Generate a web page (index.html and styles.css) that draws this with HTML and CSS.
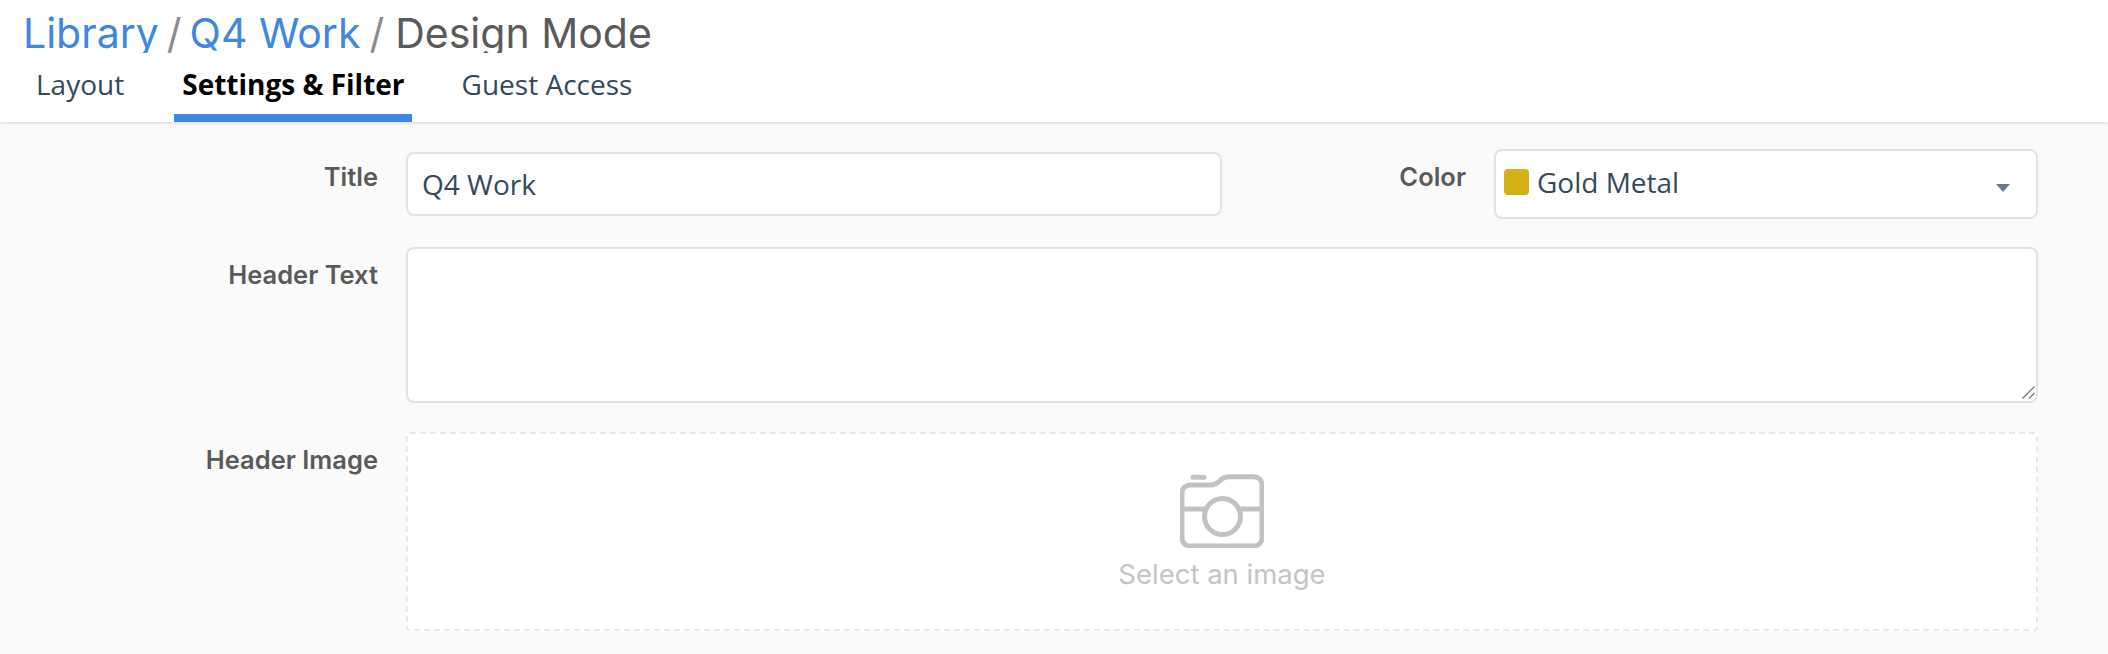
FILE: index.html
```html
<!DOCTYPE html>
<html lang="en">
<head>
    <meta charset="UTF-8">
    <title>Design Mode</title>
    <link rel="stylesheet" href="styles.css">
</head>
<body>
    <div class="header">
        <h1 class="crumbs">
            <a class="crumb-link">Library</a><span class="crumb-sep">/</span><a class="crumb-link">Q4 Work</a><span class="crumb-sep crumb-sep-last">/</span><span class="crumb-current">Design Mode</span>
        </h1>
        <div class="tabs">
            <div class="tab">Layout</div>
            <div class="tab active">Settings &amp; Filter</div>
            <div class="tab">Guest Access</div>
        </div>
    </div>

    <div class="form">
        <div class="row row-title">
            <label class="field-label">Title</label>
            <input class="text-input" type="text" value="Q4 Work">
            <label class="field-label color-label">Color</label>
            <div class="select">
                <span class="swatch"></span>
                <span class="select-text">Gold Metal</span>
                <span class="caret"></span>
            </div>
        </div>
        <div class="row">
            <label class="field-label">Header Text</label>
            <div class="text-wrap">
                <textarea class="text-area"></textarea>
                <svg class="grip" viewBox="0 0 13 13" stroke="#6e6e6e" stroke-width="1.2">
                    <path d="M0.5 12.5 L12.5 0.5 M7 12.5 L12.5 7"/>
                </svg>
            </div>
        </div>
        <div class="row">
            <label class="field-label">Header Image</label>
            <div class="image-drop">
                <svg class="camera" viewBox="0 0 84 74" fill="none" stroke="#c2c2c2" stroke-width="5">
                    <path d="M10 11 H30 C35 11 37 9.5 40 6.5 C43 3.5 45 2.7 49 2.7 H74 a8 8 0 0 1 8 8 V64 a8 8 0 0 1 -8 8 H10 a8 8 0 0 1 -8 -8 V19 a8 8 0 0 1 8 -8 Z"/>
                    <path d="M2 35 H24 M61 35 H82"/>
                    <circle cx="42.5" cy="42.5" r="18"/>
                    <path d="M13 3.2 H24" stroke-linecap="round"/>
                </svg>
                <div class="drop-text">Select an image</div>
            </div>
        </div>
    </div>
</body>
</html>
```

FILE: styles.css
```css
* {
    box-sizing: border-box;
}
html, body {
    margin: 0;
    height: 100%;
}
body {
    background: #fafafa;
    font-family: "Inter", sans-serif;
    overflow: hidden;
}
.header {
    background: white;
    height: 122px;
    padding-left: 24px;
    box-shadow: 0 1px 3px rgba(0,0,0,0.15);
}
.crumbs {
    margin: 0 0 0 -1px;
    padding-top: 8px;
    height: 53px;
    overflow: hidden;
    font-size: 41px;
    font-weight: 400;
    line-height: 50px;
    color: #5a5a5a;
}
.crumb-link {
    color: #3f87e0;
}
.crumb-sep {
    color: #8c8c8c;
    margin: 0 8px;
}
.crumb-sep-last {
    margin: 0 11px 0 9px;
}
.tabs {
    display: flex;
    margin-top: 6px;
}
.tab {
    height: 63px;
    padding: 6px 8px 0;
    font-family: "Open Sans", sans-serif;
    font-size: 28px;
    line-height: 38px;
    color: #34495e;
    border-bottom: 8px solid transparent;
}
.tab:first-child {
    margin-right: 38px;
    padding: 6px 12px 0;
}
.tab.active {
    margin-right: 42px;
    padding: 6px 7px 0 8px;
    color: black;
    font-weight: 700;
    border-bottom-color: #3f87e0;
}
.form {
    padding: 27px 70px 0 0;
}
.row {
    display: flex;
    align-items: flex-start;
    margin-bottom: 29px;
}
.row-title {
    height: 69px;
}
.field-label {
    width: 378px;
    margin-right: 28px;
    flex-shrink: 0;
    text-align: right;
    padding-top: 13px;
    font-size: 25.5px;
    font-weight: 600;
    line-height: 30px;
    color: #5a5a5a;
}
.color-label {
    width: 76px;
    margin-left: 168px;
    margin-right: 28px;
}
.text-input {
    width: 816px;
    height: 64px;
    margin-top: 3px;
    padding: 0 14px;
    background: white;
    border: 2px solid #e2e2e2;
    border-radius: 8px;
    font-family: "Open Sans", sans-serif;
    font-size: 28px;
    color: #34495e;
}
.select {
    display: flex;
    align-items: flex-start;
    position: relative;
    flex: 1;
    height: 70px;
    padding: 18px 8px 0 8px;
    background: white;
    border: 2px solid #e2e2e2;
    border-radius: 8px;
}
.swatch {
    width: 25px;
    height: 26px;
    background: #d4b115;
    border-radius: 4px;
    margin-right: 8px;
}
.select-text {
    margin-top: -1px;
    font-family: "Open Sans", sans-serif;
    font-size: 28px;
    line-height: 28px;
    color: #34495e;
}
.caret {
    position: absolute;
    right: 26px;
    top: 33px;
    width: 0;
    height: 0;
    border-left: 7.5px solid transparent;
    border-right: 7.5px solid transparent;
    border-top: 8px solid #6b7b8c;
}
.text-wrap {
    flex: 1;
    position: relative;
    height: 156px;
}
.text-area {
    display: block;
    width: 100%;
    height: 100%;
    resize: none;
    background: white;
    border: 2px solid #e2e2e2;
    border-radius: 8px;
}
.grip {
    position: absolute;
    right: 3px;
    bottom: 4px;
    width: 13px;
    height: 13px;
}
.image-drop {
    flex: 1;
    height: 199px;
    padding-top: 40px;
    background: white;
    border: 2px dashed #e8e8e8;
    border-radius: 4px;
    text-align: center;
}
.camera {
    display: block;
    width: 84px;
    height: 74px;
    margin: 0 auto;
}
.drop-text {
    margin-top: 10px;
    font-size: 27.5px;
    line-height: 32px;
    color: #c4c4c4;
}
```
